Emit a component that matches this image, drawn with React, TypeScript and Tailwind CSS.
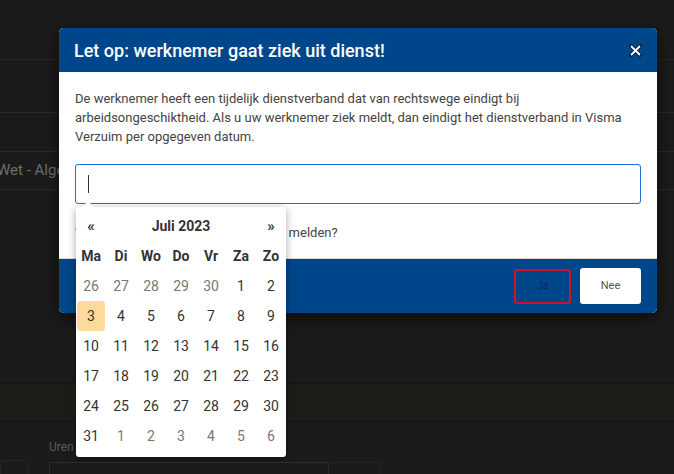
const dayNames = ["Ma", "Di", "Wo", "Do", "Vr", "Za", "Zo"];

const weeks = [
  [26, 27, 28, 29, 30, 1, 2],
  [3, 4, 5, 6, 7, 8, 9],
  [10, 11, 12, 13, 14, 15, 16],
  [17, 18, 19, 20, 21, 22, 23],
  [24, 25, 26, 27, 28, 29, 30],
  [31, 1, 2, 3, 4, 5, 6],
];

function DatePicker() {
  return (
    <div className="absolute left-[76px] top-[207px] w-[210px] rounded-[3px] bg-white pt-[4px] pb-[6px] shadow-[0_2px_8px_rgba(0,0,0,0.35)]">
      <span className="absolute -top-[6px] left-[6px] h-0 w-0 border-x-[6px] border-b-[6px] border-x-transparent border-b-white" />
      <div className="grid grid-cols-7 text-[14px] text-[#333]">
        <button className="flex h-[30px] items-center justify-center text-[15px] font-bold">«</button>
        <div className="col-span-5 flex h-[30px] items-center justify-center font-bold">Juli 2023</div>
        <button className="flex h-[30px] items-center justify-center text-[15px] font-bold">»</button>
        {dayNames.map((d) => (
          <div key={d} className="flex h-[30px] items-center justify-center font-bold">
            {d}
          </div>
        ))}
        {weeks.map((week, wi) =>
          week.map((day, di) => {
            const other = (wi === 0 && day > 20) || (wi === 5 && day < 10);
            const active = wi === 1 && di === 0;
            return (
              <div
                key={`${wi}-${di}`}
                className={
                  active
                    ? "mx-[1px] flex h-[30px] items-center justify-center rounded-[4px] bg-[#fdd99b] text-[#333]"
                    : other
                    ? "flex h-[30px] items-center justify-center text-[#777]"
                    : "flex h-[30px] items-center justify-center text-[#333]"
                }
              >
                {day}
              </div>
            );
          })
        )}
      </div>
    </div>
  );
}

export default function App() {
  return (
    <div
      className="relative h-[474px] w-[674px] overflow-hidden bg-[#1b1b1b]"
      style={{ fontFamily: "Roboto, 'Liberation Sans', sans-serif" }}
    >
      {/* background page */}
      <div className="flex flex-col">
        <div className="h-[60px] border-b border-[#262626]" />
        <div className="h-[53px] border-b border-[#2a2a2a]" />
        <div className="h-[39px] border-b border-[#2a2a2a]" />
        <div className="flex h-[38px] items-center border-b border-[#2a2a2a] text-[15px] text-[#6e6e6e]">
          <span className="-ml-[3px]">Wet - Algemeen</span>
        </div>
        <div className="h-[193px]" />
        <div className="h-[39px] border-y border-[#151515] bg-[#1c1c18]" />
        <div className="flex gap-[21px] pt-[16px]">
          <div className="mt-[22px] h-[30px] w-[28px] rounded-[3px] border border-[#262626]" />
          <div className="flex flex-col">
            <span className="text-[12px] text-[#5a5a5a]">Uren</span>
            <div className="mt-[6px] flex">
              <div className="h-[30px] w-[280px] rounded-l-[3px] border border-[#2e2e2e] bg-[#1a1a1a]" />
              <div className="h-[30px] w-[52px] rounded-r-[3px] border border-l-0 border-[#242424]" />
            </div>
          </div>
        </div>
      </div>

      {/* modal */}
      <div className="absolute left-[59px] top-[28px] w-[598px] overflow-hidden rounded-[5px] bg-white shadow-[0_4px_16px_rgba(0,0,0,0.6)]">
        <div className="flex h-[44px] items-center justify-between bg-[#00468a] pl-[15px] pr-[15px]">
          <h2 className="text-[18px] font-medium text-white">Let op: werknemer gaat ziek uit dienst!</h2>
          <button>
            <svg width="13" height="13" viewBox="0 0 13 13">
              <path d="M2 2 L11 11 M11 2 L2 11" stroke="#0b1a2e" strokeWidth="3.4" strokeLinecap="square" />
              <path d="M2 2 L11 11 M11 2 L2 11" stroke="white" strokeWidth="1.8" />
            </svg>
          </button>
        </div>
        <div className="px-[16px] pt-[17px] pb-[16px]">
          <p className="text-[13px] leading-[19px] text-[#444]">
            De werknemer heeft een tijdelijk dienstverband dat van rechtswege eindigt bij arbeidsongeschiktheid. Als u uw
            werknemer ziek meldt, dan eindigt het dienstverband in Visma Verzuim per opgegeven datum.
          </p>
          <div className="mt-[18px] flex h-[40px] w-[566px] items-center rounded-[3px] border border-[#1e6fd6] px-[12px]">
            <span className="h-[18px] w-px bg-[#333]" />
          </div>
          <p className="mt-[19px] text-[13px] leading-[19px] text-[#444]">Wilt u de werknemer nu toch als ziek melden?</p>
        </div>
        <div className="flex h-[55px] items-center justify-end gap-[9px] border-t border-[#d8d8d8] bg-[#00468a] pr-[16px]">
          <button className="h-[35px] w-[57px] rounded-[3px] border-2 border-[#d0112b] text-[11px] text-[#152a4a]">Ja</button>
          <button className="h-[36px] w-[61px] rounded-[3px] bg-white text-[11px] text-[#555]">Nee</button>
        </div>
      </div>

      <DatePicker />
    </div>
  );
}
